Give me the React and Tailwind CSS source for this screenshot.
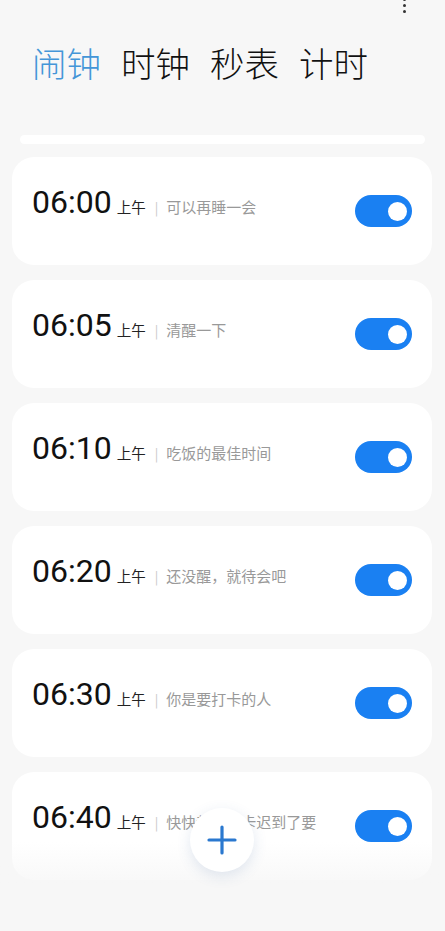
import React from "react";

const alarms = [
  { time: "06:00", label: "可以再睡一会" },
  { time: "06:05", label: "清醒一下" },
  { time: "06:10", label: "吃饭的最佳时间" },
  { time: "06:20", label: "还没醒，就待会吧" },
  { time: "06:30", label: "你是要打卡的人" },
  { time: "06:40", label: "快快起床打卡迟到了要" },
];

function Toggle() {
  return (
    <div className="w-[57px] h-[32px] rounded-full bg-[#1a80f2] flex items-center justify-end pr-[5px] shrink-0">
      <div className="w-[19px] h-[19px] rounded-full bg-white" />
    </div>
  );
}

function Card({ time, label }) {
  return (
    <div className="h-[108px] shrink-0 ml-[12px] mr-[13px] bg-white rounded-[22px] flex items-center justify-between pl-[20px] pr-[20px]">
      <div className="flex items-baseline mb-[18px]">
        <span className="text-[32px] leading-none font-normal text-[#111] [font-family:Roboto,'Noto_Sans_CJK_SC',sans-serif]">
          {time}
        </span>
        <span className="ml-[5px] text-[14.5px] text-[#222] [font-family:'Noto_Sans_CJK_SC',sans-serif]">上午</span>
        <span className="ml-[9px] text-[13px] text-[#c8c8c8] [font-family:'Noto_Sans_CJK_SC',sans-serif]">|</span>
        <span className="ml-[8px] text-[15px] text-[#999] [font-family:'Noto_Sans_CJK_SC',sans-serif]">{label}</span>
      </div>
      <Toggle />
    </div>
  );
}

export default function App() {
  return (
    <div className="relative w-[445px] h-[931px] overflow-hidden bg-[#f7f7f7] [font-family:'Noto_Sans_CJK_SC',sans-serif]">
      <div className="h-[16px] flex justify-end pr-[39px]">
        <div className="flex flex-col items-center gap-[3px] -mt-[2px]">
          <div className="w-[3px] h-[3px] rounded-full bg-[#333]" />
          <div className="w-[3px] h-[3px] rounded-full bg-[#333]" />
          <div className="w-[3px] h-[3px] rounded-full bg-[#333]" />
        </div>
      </div>
      <div className="mt-[29px] pl-[32px] flex gap-[20px] text-[34.5px] leading-none font-light">
        <span className="text-[#4496d8]">闹钟</span>
        <span className="text-[#111]">时钟</span>
        <span className="text-[#111]">秒表</span>
        <span className="text-[#111]">计时</span>
      </div>
      <div className="mt-[55.5px] mx-[20px] h-[9px] rounded-full bg-white" />
      <div className="mt-[13px] flex flex-col gap-[15px]">
        {alarms.map((a) => (
          <Card key={a.time} {...a} />
        ))}
      </div>
      <div className="absolute left-0 right-0 top-[842px] h-[48px] bg-gradient-to-b from-[#f7f7f700] to-[#f7f7f7]" />
      <div className="absolute left-0 right-0 top-[890px] bottom-0 bg-[#f7f7f7]" />
      <div className="absolute left-[190px] top-[808px] w-[64px] h-[64px] rounded-full bg-white shadow-[0_4px_14px_rgba(60,100,160,0.15)] flex items-center justify-center">
        <svg width="30" height="30" viewBox="0 0 30 30">
          <path d="M15 2v26M2 15h26" stroke="#2a78cf" strokeWidth="3.2" strokeLinecap="round" />
        </svg>
      </div>
    </div>
  );
}
